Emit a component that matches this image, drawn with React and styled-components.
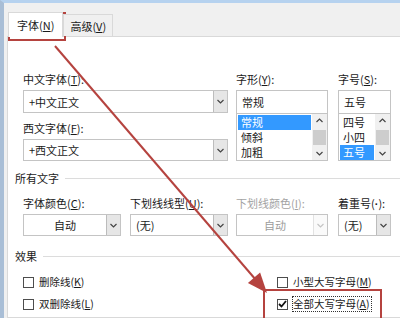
import React from 'react';
import styled, { createGlobalStyle } from 'styled-components';

const GlobalStyle = createGlobalStyle`
  html, body {
    margin: 0;
    padding: 0;
    background: #f0f0f0;
  }
  body {
    font-family: "Noto Sans CJK SC", "Noto Sans", sans-serif;
    font-size: 11px;
    color: #1a1a1a;
  }
  u { text-decoration-thickness: 1px; text-underline-offset: 1px; }
`;

const RED = '#b5433f';

const Window = styled.div`
  position: relative;
  width: 400px;
  height: 318px;
  overflow: hidden;
  box-sizing: border-box;
  background: #f0f0f0;
  border-top: 3px solid #b6d2ef;
  border-left: 4px solid #a9bed6;
  display: flex;
  flex-direction: column;
`;

const TabStrip = styled.div`
  display: flex;
  align-items: flex-end;
  height: 33px;
  padding-left: 4px;
`;

const Tab = styled.div`
  position: relative;
  box-sizing: border-box;
  height: ${({ active }) => (active ? '25px' : '22px')};
  padding: 0 ${({ active }) => (active ? '8px' : '6px')};
  display: flex;
  align-items: center;
  background: ${({ active }) => (active ? '#fff' : '#f0f0f0')};
  border: 1px solid #d9d9d9;
  border-bottom: none;
  margin-bottom: ${({ active }) => (active ? '-1px' : '0')};
  z-index: ${({ active }) => (active ? 2 : 1)};
  line-height: 16px;
`;

const Highlight = styled.div`
  position: absolute;
  border: 2px solid ${RED};
  pointer-events: none;
`;

const Panel = styled.div`
  flex: 1;
  background: #fff;
  border: 1px solid #d9d9d9;
  border-right: none;
  margin-left: 3px;
  padding: 34px 0 0 15px;
`;

const TopRow = styled.div`
  display: flex;
  gap: 8px;
`;

const Column = styled.div`
  display: flex;
  flex-direction: column;
  width: ${({ w }) => w}px;
  margin-left: ${({ ml }) => ml || 0}px;
`;

const Label = styled.div`
  height: 16px;
  line-height: 16px;
  white-space: nowrap;
  margin-top: ${({ mt }) => mt || 0}px;
  margin-bottom: 3px;
  color: ${({ disabled }) => (disabled ? '#a3a3a3' : '#1a1a1a')};
`;

const Dot = styled.span`
  font-family: "Liberation Sans", sans-serif;
  font-weight: bold;
`;

const Field = styled.div`
  box-sizing: border-box;
  height: ${({ h }) => h || 22}px;
  border: 1px solid #c4c4c4;
  background: #fff;
  display: flex;
  align-items: center;
  justify-content: ${({ center }) => (center ? 'center' : 'flex-start')};
  position: relative;
  padding-left: ${({ center }) => (center ? '0' : '5px')};
  padding-right: ${({ withButton }) => (withButton ? '14px' : '0')};
  color: ${({ disabled }) => (disabled ? '#9c9c9c' : '#1a1a1a')};
`;

const DropButton = styled.div`
  position: absolute;
  right: 0;
  top: 0;
  bottom: 0;
  width: 14px;
  box-sizing: border-box;
  border-left: 1px solid ${({ disabled }) => (disabled ? '#e2e2e2' : '#bcbcbc')};
  background: ${({ disabled }) => (disabled ? '#fafafa' : '#e6e6e6')};
  display: flex;
  align-items: center;
  justify-content: center;
`;

const ListBox = styled.div`
  box-sizing: border-box;
  height: 48px;
  margin-top: -1px;
  border: 1px solid #c4c4c4;
  display: flex;
  background: #fff;
`;

const Items = styled.div`
  flex: 1;
  padding: 1px 1px 0 1px;
  display: flex;
  flex-direction: column;
`;

const Item = styled.div`
  height: 15px;
  line-height: 15px;
  padding-left: 3px;
  background: ${({ selected }) => (selected ? '#3399ff' : 'transparent')};
  color: ${({ selected }) => (selected ? '#fff' : '#1a1a1a')};
`;

const ScrollBar = styled.div`
  width: 15px;
  background: #f0f0f0;
  display: flex;
  flex-direction: column;
  align-items: center;
  justify-content: space-between;
  padding: 4px 0;
  box-sizing: border-box;
`;

const Thumb = styled.div`
  width: 13px;
  height: 15px;
  background: #cdcdcd;
`;

const Section = styled.div`
  display: flex;
  align-items: center;
  height: 16px;
  margin-top: ${({ mt }) => mt}px;
  margin-left: -8px;
  gap: 6px;

  &::after {
    content: '';
    flex: 1;
    height: 1px;
    background: #dcdcdc;
  }
`;

const FieldRow = styled.div`
  display: flex;
  margin-top: 9px;
`;

const Effects = styled.div`
  display: grid;
  grid-template-columns: 254px 1fr;
  row-gap: 6px;
  margin-top: 10px;
`;

const Check = styled.div`
  display: flex;
  align-items: center;
  gap: 2px;
  height: 16px;
  line-height: 14px;
  font-size: 10.5px;
  white-space: nowrap;
`;

const Box = styled.div`
  flex: none;
  width: 11px;
  height: 11px;
  box-sizing: border-box;
  border: 1px solid #4d4d4d;
  background: #fff;
  display: flex;
  align-items: center;
  justify-content: center;
  margin-right: 2px;
`;

const CheckText = styled.span`
  flex: none;
  padding: 0 1px 0 0;
  border: 1px ${({ focused }) => (focused ? 'dotted #333' : 'solid transparent')};
`;

const Overlay = styled.svg`
  position: absolute;
  left: -4px;
  top: -3px;
  pointer-events: none;
`;

const Chevron = ({ dir = 'down', color = '#444' }) => (
  <svg width="7" height="5" viewBox="0 0 7 5">
    <polyline
      points={dir === 'down' ? '0.5,1 3.5,4 6.5,1' : '0.5,4 3.5,1 6.5,4'}
      fill="none"
      stroke={color}
      strokeWidth="1.2"
    />
  </svg>
);

const Dropdown = ({ value, center, disabled, h }) => (
  <Field withButton center={center} disabled={disabled} h={h}>
    {value}
    <DropButton disabled={disabled}>
      <Chevron color={disabled ? '#c4c4c4' : '#444'} />
    </DropButton>
  </Field>
);

const List = ({ items, selected }) => (
  <ListBox>
    <Items>
      {items.map((it) => (
        <Item key={it} selected={it === selected}>
          {it}
        </Item>
      ))}
    </Items>
    <ScrollBar>
      <Chevron dir="up" />
      <Thumb />
      <Chevron />
    </ScrollBar>
  </ListBox>
);

const CheckItem = ({ label, checked, focused }) => (
  <Check>
    <Box>
      {checked && (
        <svg width="9" height="8" viewBox="0 0 9 8">
          <polyline points="1,4 3.5,6.5 8,1" fill="none" stroke="#111" strokeWidth="1.8" />
        </svg>
      )}
    </Box>
    <CheckText focused={focused}>{label}</CheckText>
  </Check>
);

const App = () => (
  <>
    <GlobalStyle />
    <Window>
      <TabStrip>
        <Tab active>
          字体(<u>N</u>)
        </Tab>
        <Tab>
          高级(<u>V</u>)
        </Tab>
      </TabStrip>

      <Panel>
        <TopRow>
          <Column w={205}>
            <Label>
              中文字体(<u>T</u>):
            </Label>
            <Dropdown value="+中文正文" h={23} />
            <Label mt={7}>
              西文字体(<u>F</u>):
            </Label>
            <Dropdown value="+西文正文" />
          </Column>
          <Column w={92}>
            <Label>
              字形(<u>Y</u>):
            </Label>
            <Field h={24}>常规</Field>
            <List items={['常规', '倾斜', '加粗']} selected="常规" />
          </Column>
          <Column w={53} ml={2}>
            <Label>
              字号(<u>S</u>):
            </Label>
            <Field h={24}>五号</Field>
            <List items={['四号', '小四', '五号']} selected="五号" />
          </Column>
        </TopRow>

        <Section mt={9}>所有文字</Section>

        <FieldRow>
          <Column w={98}>
            <Label>
              字体颜色(<u>C</u>):
            </Label>
            <Dropdown value="自动" center />
          </Column>
          <Column w={98} ml={9}>
            <Label>
              下划线线型(<u>U</u>):
            </Label>
            <Dropdown value="(无)" />
          </Column>
          <Column w={92} ml={8}>
            <Label disabled>
              下划线颜色(<u>I</u>):
            </Label>
            <Dropdown value="自动" center disabled />
          </Column>
          <Column w={53} ml={10}>
            <Label>
              着重号(<Dot>·</Dot>):
            </Label>
            <Dropdown value="(无)" />
          </Column>
        </FieldRow>

        <Section mt={12}>效果</Section>

        <Effects>
          <CheckItem label={<>删除线(<u>K</u>)</>} />
          <CheckItem label={<>小型大写字母(<u>M</u>)</>} />
          <CheckItem label={<>双删除线(<u>L</u>)</>} />
          <CheckItem label={<>全部大写字母(<u>A</u>)</>} checked focused />
        </Effects>
      </Panel>

      <Highlight style={{ left: 259, top: 286, width: 115, height: 34 }} />
      <Highlight style={{ left: 4, top: 9, width: 54, height: 25 }} />

      <Overlay width="400" height="318" viewBox="0 0 400 318">
        <line x1="55" y1="46" x2="256" y2="280" stroke={RED} strokeWidth="2" />
        <polygon points="267,293 247.9,283 260.1,272.6" fill={RED} />
      </Overlay>
    </Window>
  </>
);

export default App;
